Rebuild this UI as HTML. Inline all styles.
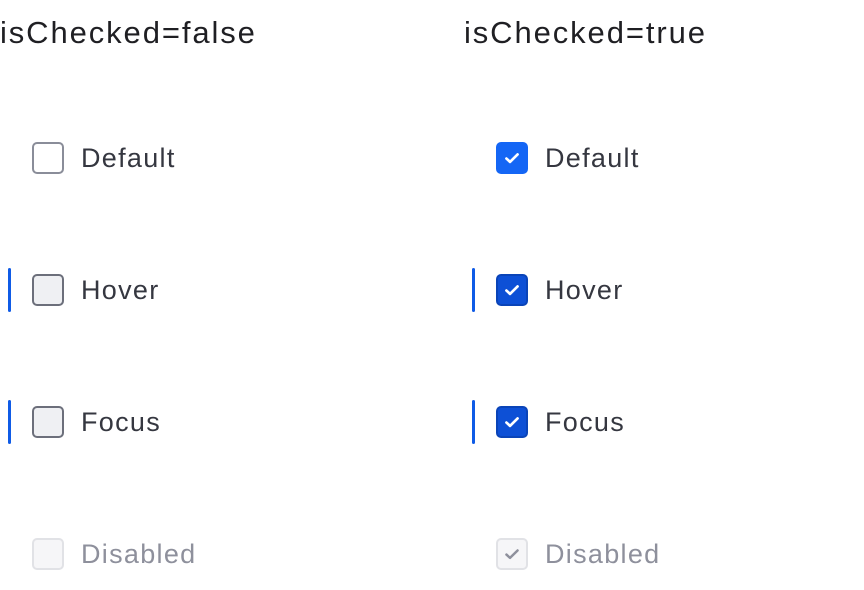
<!DOCTYPE html>
<html><head><style>
body{margin:0;width:864px;height:590px;background:#fff;font-family:"Liberation Sans",sans-serif;position:relative;overflow:hidden}
.h{position:absolute;top:13px;font-size:31px;letter-spacing:1.9px;color:#1f1f23;line-height:40px}
.r{position:absolute;height:44px;display:flex;align-items:center}
.bar{position:absolute;left:-24px;top:0;width:3px;height:44px;background:#0f5be6;border-radius:2px}
.cb{box-sizing:border-box;width:32px;height:32px;border-radius:5px;border:2px solid #8a8d99;background:#fff;display:flex;align-items:center;justify-content:center}
.l{margin-left:17px;font-size:27px;letter-spacing:1.3px;color:#353740}
.hov{background:#eff0f3;border-color:#6c6f7b}
.dis{background:#f6f6f8;border-color:#e1e2e6}
.dl{color:#8e909c}
.on{background:#1466f5;border-color:#1466f5}
.onh{background:#0d50d6;border-color:#0a44b8}
</style></head><body>
<div class="h" style="left:0">isChecked=false</div>
<div class="h" style="left:464px">isChecked=true</div>

<div class="r" style="left:32px;top:136px"><div class="cb"></div><span class="l">Default</span></div>
<div class="r" style="left:32px;top:268px"><div class="bar"></div><div class="cb hov"></div><span class="l">Hover</span></div>
<div class="r" style="left:32px;top:400px"><div class="bar"></div><div class="cb hov"></div><span class="l">Focus</span></div>
<div class="r" style="left:32px;top:532px"><div class="cb dis"></div><span class="l dl">Disabled</span></div>

<div class="r" style="left:496px;top:136px"><div class="cb on"><svg width="20" height="20" viewBox="0 0 18 18"><path d="M4 9.5l3.2 3L14 5.8" fill="none" stroke="#fff" stroke-width="2.4" stroke-linecap="round" stroke-linejoin="round"/></svg></div><span class="l">Default</span></div>
<div class="r" style="left:496px;top:268px"><div class="bar"></div><div class="cb onh"><svg width="20" height="20" viewBox="0 0 18 18"><path d="M4 9.5l3.2 3L14 5.8" fill="none" stroke="#fff" stroke-width="2.4" stroke-linecap="round" stroke-linejoin="round"/></svg></div><span class="l">Hover</span></div>
<div class="r" style="left:496px;top:400px"><div class="bar"></div><div class="cb onh"><svg width="20" height="20" viewBox="0 0 18 18"><path d="M4 9.5l3.2 3L14 5.8" fill="none" stroke="#fff" stroke-width="2.4" stroke-linecap="round" stroke-linejoin="round"/></svg></div><span class="l">Focus</span></div>
<div class="r" style="left:496px;top:532px"><div class="cb dis"><svg width="20" height="20" viewBox="0 0 18 18"><path d="M4 9.5l3.2 3L14 5.8" fill="none" stroke="#8e909c" stroke-width="2.2" stroke-linecap="round" stroke-linejoin="round"/></svg></div><span class="l dl">Disabled</span></div>
</body></html>
